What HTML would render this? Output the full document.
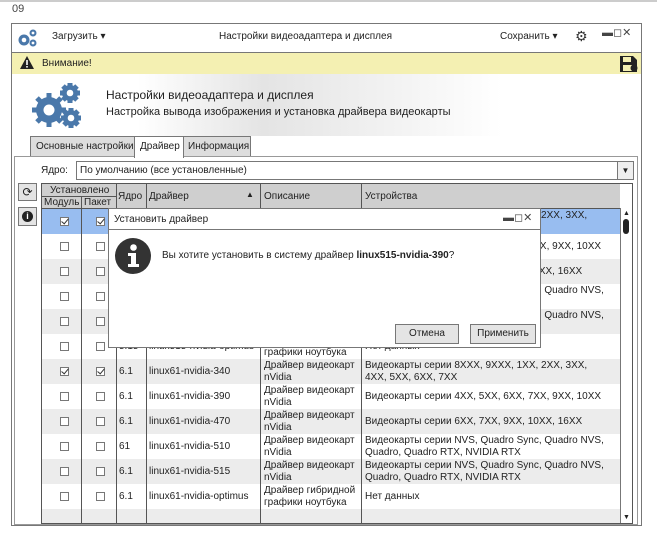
<!DOCTYPE html>
<html><head><meta charset="utf-8"><style>
*{box-sizing:border-box;margin:0;padding:0}
body{width:657px;height:536px;background:#fff;font-family:"Liberation Sans","DejaVu Sans",sans-serif;font-size:10px;color:#222;position:relative;overflow:hidden}
.a{position:absolute}
.t{white-space:nowrap}
.cb{position:absolute;width:9px;height:9px;border:1px solid #777;background:#fff}
.ck::after{content:"";position:absolute;left:2px;top:-1px;width:3px;height:6px;border:solid #333;border-width:0 1.5px 1.5px 0;transform:rotate(40deg)}
.vl{position:absolute;top:183px;height:341px;width:1px;background:#555}
.btn{position:absolute;border:1px solid #777;background:#e4e4e4;text-align:center;line-height:17px}
</style></head><body>
<div class="a" style="left:0;top:0;width:657px;height:2px;background:#ccc"></div>
<div class="a t" style="left:12px;top:3px;font-size:11px;color:#444">09</div>
<div class="a" style="left:11px;top:23px;width:631px;height:503px;border:1px solid #777"></div>
<svg class="a" style="left:16px;top:27px" width="24" height="22" viewBox="0 0 24 22"><g fill="#4a78aa"><circle cx="8" cy="13" r="5.5"/><circle cx="17" cy="6" r="3.5"/><circle cx="17" cy="16" r="3.5"/></g><g fill="#fff"><circle cx="8" cy="13" r="2.3"/><circle cx="17" cy="6" r="1.4"/><circle cx="17" cy="16" r="1.4"/></g></svg>
<div class="a t" style="left:52px;top:31px">Загрузить ▾</div>
<div class="a t" style="left:219px;top:31px">Настройки видеоадаптера и дисплея</div>
<div class="a t" style="left:500px;top:31px">Сохранить ▾</div>
<div class="a t" style="left:575px;top:28px;font-size:14px;color:#333">⚙</div>
<div class="a t" style="left:602px;top:26px;font-size:11px;color:#444">▬◻✕</div>
<div class="a" style="left:12px;top:52px;width:629px;height:1px;background:#777"></div>
<div class="a" style="left:12px;top:53px;width:629px;height:21px;background:#f4f0b2"></div>
<svg class="a" style="left:19px;top:55px" width="16" height="15"><path d="M8 1L15 14H1Z" fill="#222"/><rect x="7.2" y="5" width="1.6" height="5" fill="#fff"/><rect x="7.2" y="11" width="1.6" height="1.6" fill="#fff"/></svg>
<div class="a t" style="left:42px;top:58px">Внимание!</div>
<svg class="a" style="left:619px;top:55px" width="19" height="18"><path d="M1 1H14L18 5V17H1Z" fill="#222"/><rect x="4" y="2" width="8" height="5" fill="#f4f0b2"/><rect x="4" y="10" width="9" height="6" fill="#f4f0b2"/><circle cx="15" cy="13" r="3.5" fill="#222"/></svg>
<div class="a" style="left:12px;top:74px;width:629px;height:62px;background:linear-gradient(90deg,#fff 20%,#e4e4e4 40%,#f2f2f2 60%,#fff 78%)"></div>
<svg class="a" style="left:32px;top:80px" width="52" height="50" viewBox="0 0 52 50"><g fill="#4a78aa"><circle cx="17" cy="30" r="13"/><circle cx="38" cy="13" r="8"/><circle cx="39" cy="38" r="8"/><g stroke="#4a78aa" stroke-width="5"><path d="M17 13V47M0 30H34M5 18L29 42M29 18L5 42"/><path d="M38 3V23M28 13H48M31 6L45 20M45 6L31 20"/><path d="M39 28V48M29 38H49M32 31L46 45M46 31L32 45"/></g></g><g fill="#fff"><circle cx="17" cy="30" r="5.5"/><circle cx="38" cy="13" r="3.3"/><circle cx="39" cy="38" r="3.3"/></g></svg>
<div class="a t" style="left:106px;top:88px;font-size:12px">Настройки видеоадаптера и дисплея</div>
<div class="a t" style="left:106px;top:106px;font-size:11px">Настройка вывода изображения и установка драйвера видеокарты</div>
<div class="a t" style="left:30px;top:136px;width:105px;height:21px;border:1px solid #777;background:#ddd;padding:4px 0 0 5px;overflow:hidden">Основные настройки</div>
<div class="a t" style="left:134px;top:136px;width:50px;height:22px;border:1px solid #777;border-bottom:none;background:#fff;padding:4px 0 0 5px;z-index:2">Драйвер</div>
<div class="a t" style="left:183px;top:136px;width:68px;height:21px;border:1px solid #777;background:#ddd;padding:4px 0 0 4px">Информация</div>
<div class="a" style="left:14px;top:156px;width:624px;height:369px;border:1px solid #999"></div>
<div class="a t" style="left:41px;top:165px">Ядро:</div>
<div class="a t" style="left:76px;top:161px;width:558px;height:19px;border:1px solid #777;padding:3px 0 0 3px">По умолчанию (все установленные)</div>
<div class="a" style="left:617px;top:162px;width:16px;height:17px;border-left:1px solid #777;background:#eee;font-size:8px;text-align:center;line-height:17px">▼</div>
<div class="btn" style="left:18px;top:183px;width:19px;height:18px;font-size:12px;line-height:16px">⟳</div>
<div class="btn" style="left:18px;top:207px;width:19px;height:19px"><span style="display:inline-block;width:11px;height:11px;border-radius:50%;background:#222;color:#fff;font-size:9px;line-height:11px;font-weight:bold;margin-top:3px">i</span></div>
<div class="a" style="left:41px;top:183px;width:592px;height:341px;border:1px solid #555;background:#fff"></div>
<div class="a" style="left:42px;top:184px;width:578px;height:24px;background:#cfcfcf"></div>
<div id="rows"></div>
<div class="a" style="left:42px;top:196px;width:74px;height:1px;background:#555"></div>
<div class="a" style="left:42px;top:208px;width:578px;height:1px;background:#555"></div>
<div class="vl" style="left:81px;top:196px;height:328px"></div>
<div class="vl" style="left:116px"></div><div class="vl" style="left:146px"></div><div class="vl" style="left:260px"></div><div class="vl" style="left:361px"></div>
<div class="a t" style="left:50px;top:185px">Установлено</div>
<div class="a t" style="left:44px;top:197px">Модуль</div><div class="a t" style="left:84px;top:197px">Пакет</div>
<div class="a t" style="left:118px;top:191px">Ядро</div><div class="a t" style="left:149px;top:191px">Драйвер</div>
<div class="a t" style="left:246px;top:190px;font-size:8px">▲</div>
<div class="a t" style="left:264px;top:191px">Описание</div><div class="a t" style="left:365px;top:191px">Устройства</div>
<div class="a" style="left:620px;top:208px;width:12px;height:315px;border-left:1px solid #777;background:#fff"></div>
<div class="a" style="left:623px;top:210px;font-size:7px">▲</div>
<div class="a" style="left:623px;top:219px;width:6px;height:15px;border-radius:3px;background:#222"></div>
<div class="a" style="left:623px;top:514px;font-size:7px">▼</div>
<script>
var r=[[1,1,"5.15","linux515-nvidia-340","Драйвер видеокарт<br>nVidia","Видеокарты серии 8XXX, 9XXX, 1XX, 2XX, 3XX,<br>4XX, 5XX, 6XX, 7XX"],
[0,0,"5.15","linux515-nvidia-390","Драйвер видеокарт<br>nVidia","Видеокарты серии 4XX, 5XX, 6XX, 7XX, 9XX, 10XX"],
[0,0,"5.15","linux515-nvidia-470","Драйвер видеокарт<br>nVidia","Видеокарты серии 6XX, 7XX, 9XX, 10XX, 16XX"],
[0,0,"5.15","linux515-nvidia-510","Драйвер видеокарт<br>nVidia","Видеокарты серии NVS, Quadro Sync, Quadro NVS,<br>Quadro, Quadro RTX, NVIDIA RTX"],
[0,0,"5.15","linux515-nvidia-515","Драйвер видеокарт<br>nVidia","Видеокарты серии NVS, Quadro Sync, Quadro NVS,<br>Quadro, Quadro RTX, NVIDIA RTX"],
[0,0,"5.15","linux515-nvidia-optimus","Драйвер гибридной<br>графики ноутбука","Нет данных"],
[1,1,"6.1","linux61-nvidia-340","Драйвер видеокарт<br>nVidia","Видеокарты серии 8XXX, 9XXX, 1XX, 2XX, 3XX,<br>4XX, 5XX, 6XX, 7XX"],
[0,0,"6.1","linux61-nvidia-390","Драйвер видеокарт<br>nVidia","Видеокарты серии 4XX, 5XX, 6XX, 7XX, 9XX, 10XX"],
[0,0,"6.1","linux61-nvidia-470","Драйвер видеокарт<br>nVidia","Видеокарты серии 6XX, 7XX, 9XX, 10XX, 16XX"],
[0,0,"61","linux61-nvidia-510","Драйвер видеокарт<br>nVidia","Видеокарты серии NVS, Quadro Sync, Quadro NVS,<br>Quadro, Quadro RTX, NVIDIA RTX"],
[0,0,"6.1","linux61-nvidia-515","Драйвер видеокарт<br>nVidia","Видеокарты серии NVS, Quadro Sync, Quadro NVS,<br>Quadro, Quadro RTX, NVIDIA RTX"],
[0,0,"6.1","linux61-nvidia-optimus","Драйвер гибридной<br>графики ноутбука","Нет данных"]];
var h="";
for(var i=0;i<13;i++){var y=209+i*25;var bg=i==0?"#98bdf0":(i%2==0?"#ececec":"#fff");
h+='<div class="a" style="left:42px;top:'+y+'px;width:578px;height:'+(i==12?14:25)+'px;background:'+bg+'"></div>';
if(i<12){var d=r[i];
h+='<div class="cb'+(d[0]?' ck':'')+'" style="left:60px;top:'+(y+8)+'px"></div>';
h+='<div class="cb'+(d[1]?' ck':'')+'" style="left:96px;top:'+(y+8)+'px"></div>';
h+='<div class="a t" style="left:119px;top:'+(y+7)+'px">'+d[2]+'</div>';
h+='<div class="a t" style="left:149px;top:'+(y+7)+'px">'+d[3]+'</div>';
h+='<div class="a t" style="left:264px;top:'+(y+1)+'px;line-height:11.5px;width:96px;overflow:hidden">'+d[4]+'</div>';
var t2=d[5].indexOf("<br>")>=0;
h+='<div class="a t" style="left:365px;top:'+(y+(t2?1:7))+'px;line-height:11.5px">'+d[5]+'</div>';}}
document.getElementById("rows").innerHTML=h;
</script>
<div class="a" style="left:108px;top:208px;width:433px;height:140px;border:1px solid #777;background:#fff;z-index:5">
<div class="a" style="left:0;top:0;width:431px;height:21px;border-bottom:1px solid #777"></div>
<div class="a t" style="left:5px;top:5px">Установить драйвер</div>
<div class="a t" style="left:394px;top:2px;font-size:11px;color:#444">▬◻✕</div>
<svg class="a" style="left:5px;top:28px" width="38" height="38"><circle cx="19" cy="19" r="18" fill="#333"/><circle cx="19.5" cy="10.5" r="3.3" fill="#fff"/><path d="M14 16H22V27H25V30H14V27H17V19H14Z" fill="#fff"/></svg>
<div class="a t" style="left:53px;top:41px">Вы хотите установить в систему драйвер <b>linux515-nvidia-390</b>?</div>
<div class="btn" style="left:286px;top:115px;width:64px;height:20px">Отмена</div>
<div class="btn" style="left:361px;top:115px;width:66px;height:20px">Применить</div>
</div>
</body></html>
